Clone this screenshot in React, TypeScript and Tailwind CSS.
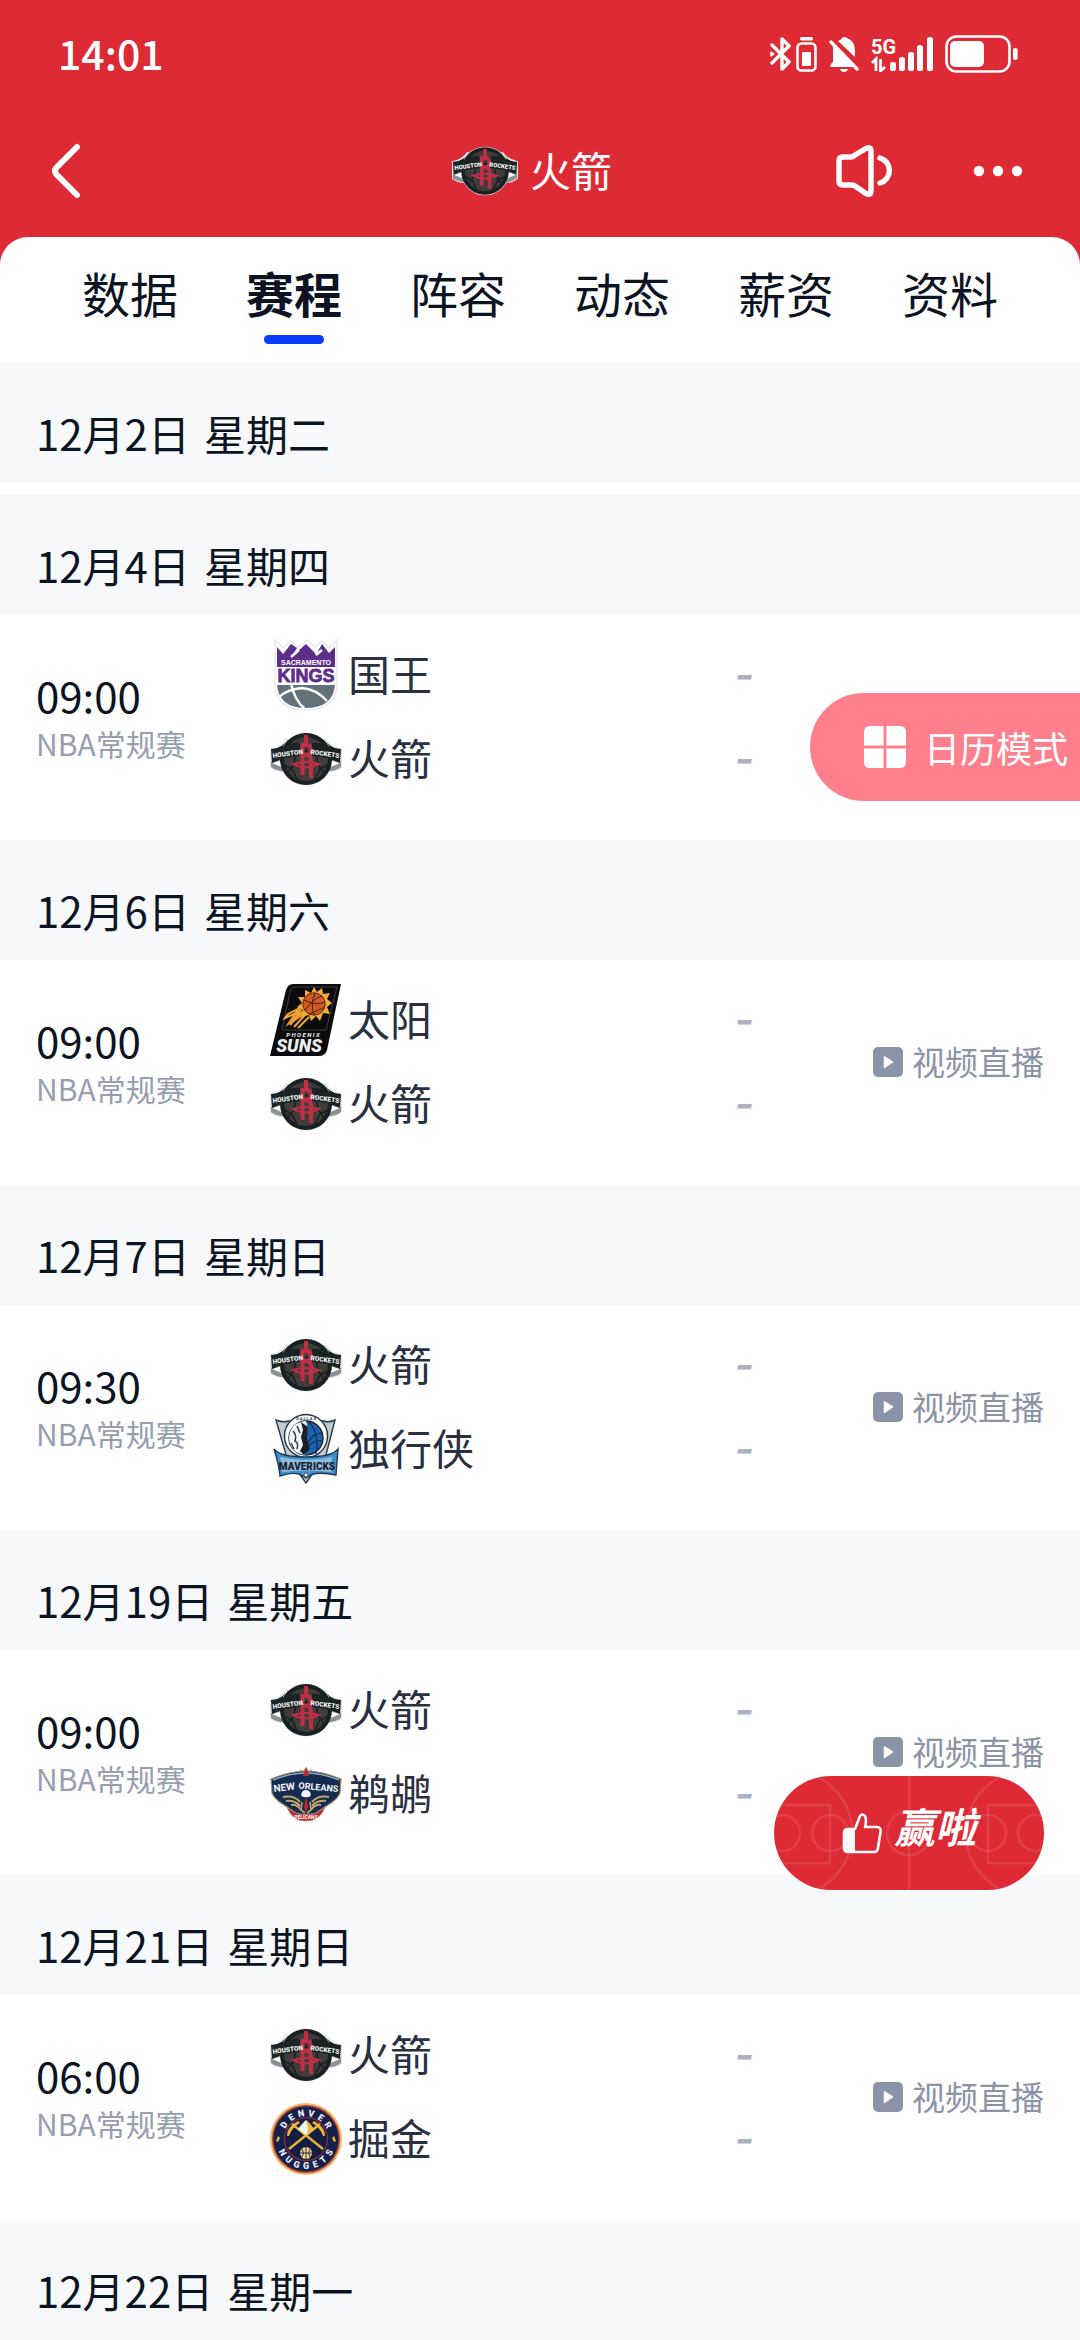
import type { ComponentType } from "react"

type LogoProps = { className?: string }

type Match = {
    time: string
    teams: TeamKey[]
    live: boolean
}

type Day = {
    date: string
    weekday: string
    match?: Match
}

const LOGO_FONT = "Roboto, 'Liberation Sans', sans-serif"

const RocketsLogo = ({ className }: LogoProps) => (
    <svg viewBox="0 0 72 72" className={className} aria-hidden="true">
        <g stroke="#e3e6e6" strokeWidth="2" strokeLinejoin="round">
            <path d="M1 39 L16 34 L18 48 Q7 49 1 44Z M71 39 L56 34 L54 48 Q65 49 71 44Z" />
            <path d="M1 26 Q12 24 17 16 L17 36 Q8 37 1 40Z M71 26 Q60 24 55 16 L55 36 Q64 37 71 40Z" />
            <circle cx="36" cy="36" r="25.5" />
        </g>
        <path d="M1 39 L16 35 L18 48 Q7 49 1 44Z M71 39 L56 35 L54 48 Q65 49 71 44Z" fill="#8c9193" />
        <path d="M2 40 L13 37 L14 45Z M70 40 L59 37 L58 45Z" fill="#fff" />
        <circle cx="36" cy="36" r="26" fill="#172022" />
        <circle cx="36" cy="36" r="22" fill="#3f3c3a" />
        <path d="M20 24 Q36 32 52 24 M18 50 Q26 40 25 34 M54 50 Q46 40 47 34 M27 56 L22 46 L14 42 M45 56 L50 46 L58 42" fill="none" stroke="#172022" strokeWidth="1.6" />
        <path d="M1 26 Q13 25 19 21 Q25 19 30 20 L30 33 Q14 34 2 40Z M71 26 Q59 25 53 21 Q47 19 42 20 L42 33 Q58 34 70 40Z" fill="#1b2425" />
        <path d="M23 41 Q36 48 49 41 Q36 37 23 41Z" fill="none" stroke="#c02e46" strokeWidth="2.2" />
        <path d="M32.500 20 V52 M32.500 22 H37 Q40.500 22 40.500 26 V28 Q40.500 32 37 32 H33 M38 32 Q41 33 41 38 V55 M36 12 V22" fill="none" stroke="#c02e46" strokeWidth="4" />
        <text x="3" y="35" transform="rotate(-8 3 35)" fontFamily={LOGO_FONT} fontWeight="900" fontSize="6.500" fill="#f1f3f3">HOUSTON</text>
        <text x="69" y="35" textAnchor="end" transform="rotate(8 69 35)" fontFamily={LOGO_FONT} fontWeight="900" fontSize="6.500" fill="#f1f3f3">ROCKETS</text>
    </svg>
)

const KingsLogo = ({ className }: LogoProps) => (
    <svg viewBox="0 0 72 72" className={className} aria-hidden="true">
        <path d="M5 1 L13 9 L21 2 L28 8 L37 1 L45 8 L52 2 L59 9 L67 1 V44 Q67 71 36 71 Q5 71 5 44Z" fill="#fff" stroke="#e4e4ea" strokeWidth="1.2" />
        <path d="M7 8 L13 15 L21 5 L27 9 L21 18 L36 5 L44 13 L46 16 L52 5 L59 14 L65 8 V28 H7Z" fill="#5d2e89" />
        <path d="M21 18 L29 11 M46 16 L52 11" stroke="#fff" strokeWidth="2.4" />
        <text x="36" y="26" textAnchor="middle" fontFamily="'Liberation Sans', sans-serif" fontWeight="700" fontSize="7" fill="#fff">SACRAMENTO</text>
        <text x="36" y="43" textAnchor="middle" fontFamily="'Liberation Sans', sans-serif" fontWeight="900" fontSize="18" fill="#5d2e89" stroke="#5d2e89" strokeWidth="0.8">KINGS</text>
        <path d="M7 46 H65 Q63 69 36 69 Q9 69 7 46Z" fill="#63717a" />
        <path d="M21 45 Q25 62 35 70 M9 58 Q18 50 32 49 Q46 50 57 62" fill="none" stroke="#fff" strokeWidth="2.4" />
    </svg>
)

const SunsLogo = ({ className }: LogoProps) => (
    <svg viewBox="0 0 72 72" className={className} aria-hidden="true">
        <path d="M23 0 H71 L57 66 Q55 72 49 72 H0 L16 6 Q18 0 23 0Z" fill="#0b0b0d" />
        <path d="M25 3 H67 L56 46 H12 L20 8 Q21 3 25 3Z" fill="none" stroke="#4c4d50" strokeWidth="0.8" />
        <path d="M29 22 L15 43 L35 31Z" fill="#e8912b" />
        <path d="M28 25 L18 30 L15 34 L29 28 M30 29 L20 41 M35 31 L24 43 M39 33 L28 44" stroke="#f0a437" strokeWidth="2" fill="none" />
        <path d="M44 3 L47 8 L52 4 L53 10 L60 9 L57 15 L62 19 L57 23 L60 30 L53 29 L50 37 L46 32 L41 37 L39 31 L31 33 L33 26 L27 23 L32 19 L28 13 L35 13 L35 6 L41 9Z" fill="#f4ab3a" />
        <circle cx="44" cy="20" r="11.2" fill="#cf5a22" stroke="#3b1609" strokeWidth="0.8" />
        <path d="M34 16 Q46 22 55 18 M45 9 Q40 20 44 31 M35 26 Q44 14 52 12 M39 30 Q50 26 55 23" fill="none" stroke="#4d1c0a" strokeWidth="1" />
        <text x="33" y="53" textAnchor="middle" fontFamily={LOGO_FONT} fontStyle="italic" fontWeight="700" fontSize="6" fill="#f5f5f5">P H O E N I X</text>
        <text x="29" y="68" textAnchor="middle" fontFamily={LOGO_FONT} fontStyle="italic" fontWeight="900" fontSize="18" fill="#eceef0">SUNS</text>
    </svg>
)

const MavericksLogo = ({ className }: LogoProps) => (
    <svg viewBox="0 0 72 72" className={className} aria-hidden="true">
        <path d="M6 7 Q14 10 18 8 H54 Q58 10 65 7 L56 42 L36 70 L16 42Z" fill="#c3c9ce" stroke="#2a3b4a" strokeWidth="1.4" />
        <circle cx="36" cy="23" r="21.5" fill="#fff" stroke="#273747" strokeWidth="1.4" />
        <circle cx="36" cy="25" r="17" fill="#1d63ae" stroke="#17212c" strokeWidth="1.4" />
        <path d="M38 8 Q50 20 46 41 M52 20 Q42 20 38 30 M53 28 Q44 26 36 36" fill="none" stroke="#12335c" strokeWidth="1.3" />
        <path d="M36 8 Q20 9 19 25 Q20 40 35 42 L38 34 L35 25 L38 16Z" fill="#f3f6f8" />
        <path d="M31 9 L38 14 L37 26 L40 36 L34 42 L30 38 L33 32 L31 24 L33 17Z" fill="#17212c" />
        <path d="M23 18 Q27 22 25 28 Q29 30 27 36 M27 13 L30 20 M21 30 L24 36" fill="none" stroke="#34424f" strokeWidth="1.6" />
        <text x="36" y="7" textAnchor="middle" fontFamily={LOGO_FONT} fontWeight="700" fontSize="4" fill="#273747">D A L L A S</text>
        <path d="M4 36 Q10 44 36 44 Q62 44 68 36 L66 62 Q52 59 43 61 L36 65 L29 61 Q20 59 10 63 Q9 52 4 36Z" fill="#3f8fcd" stroke="#1d3a57" strokeWidth="1.4" />
        <path d="M10 44 Q36 50 62 44 L61 59 Q36 56 12 59Z" fill="#8fbbdc" />
        <text x="37" y="57" textAnchor="middle" fontFamily={LOGO_FONT} fontWeight="900" fontSize="10" fill="#14202c">MAVERICKS</text>
        <circle cx="36" cy="62" r="2" fill="#fff" stroke="#273747" strokeWidth="0.8" />
    </svg>
)

const PelicansLogo = ({ className }: LogoProps) => (
    <svg viewBox="0 0 72 72" className={className} aria-hidden="true">
        <path d="M17 49 Q22 63 36 63 Q50 63 55 49Z" fill="#c8233a" stroke="#a58a5c" strokeWidth="1" />
        <path d="M30 11 L33 13 L36 9 L39 13 L42 11 L42 18 H30Z" fill="#c3a46c" />
        <path d="M1 21 Q20 13 36 13 Q52 13 71 21 L70 35 Q68 41 58 47 L46 55 Q36 58 26 55 L14 47 Q4 41 2 35Z" fill="#142c50" stroke="#a69068" strokeWidth="1.2" />
        <path d="M3 22 Q20 15 36 15 Q52 15 69 22" fill="none" stroke="#8ba9c4" strokeWidth="1.6" />
        <path d="M13 39 Q24 37 30 44 M16 43 Q25 42 30 48 M21 47 Q27 46 31 52 M59 39 Q48 37 42 44 M56 43 Q47 42 42 48 M51 47 Q45 46 41 52" fill="none" stroke="#c3a46c" strokeWidth="2" />
        <path d="M36 9 L33 18 H39Z" fill="#b5253a" />
        <text x="4" y="34" transform="rotate(-7 4 34)" fontFamily={LOGO_FONT} fontWeight="700" fontSize="10" fill="#f4f6f8">NEW</text>
        <text x="68" y="34" textAnchor="end" transform="rotate(5 68 34)" fontFamily={LOGO_FONT} fontWeight="700" fontSize="9" fill="#f4f6f8">ORLEANS</text>
        <circle cx="36" cy="38" r="5.5" fill="#142c50" />
        <path d="M31 37 Q32 32 36 32 Q40 32 41 37 Q39 40 36 39 Q33 40 31 37Z" fill="#f2f5f7" />
        <path d="M36 39 L38 49 L36 54 L34 49Z" fill="#c8233a" />
        <path d="M32 44 L31 52 L35 55 M40 44 L41 52 L37 55" fill="none" stroke="#c3a46c" strokeWidth="1.6" />
        <text x="36" y="61" textAnchor="middle" fontFamily={LOGO_FONT} fontWeight="700" fontSize="5" fill="#fff">PELICANS</text>
    </svg>
)

const NuggetsLogo = ({ className }: LogoProps) => (
    <svg viewBox="0 0 72 72" className={className} aria-hidden="true">
        <circle cx="36" cy="36" r="36" fill="#f3b56c" />
        <circle cx="36" cy="36" r="34" fill="#a9402f" />
        <circle cx="36" cy="36" r="32.5" fill="#17204a" />
        <circle cx="36" cy="36" r="21.5" fill="#151d42" stroke="#7a2f45" strokeWidth="1.4" />
        {"DENVER".split("").map((letter, i) => (
            <text key={i} x="36" y="13" textAnchor="middle" transform={`rotate(${-57 + i * 23} 36 36)`} fontFamily={LOGO_FONT} fontWeight="900" fontSize="9" fill="#e9eef5">{letter}</text>
        ))}
        {"NUGGETS".split("").map((letter, i) => (
            <text key={i} x="36" y="66" textAnchor="middle" transform={`rotate(${60 - i * 20} 36 36)`} fontFamily={LOGO_FONT} fontWeight="900" fontSize="9" fill="#e9eef5">{letter}</text>
        ))}
        <path d="M6 38 L8 33 L10 35 L8 39Z M66 38 L64 33 L62 35 L64 39Z" fill="#f2b632" />
        <path d="M19 46 L50 21 M53 46 L22 21" stroke="#e8b23a" strokeWidth="2.4" />
        <path d="M17 33 Q17 24 28 18 L30 20 Q22 24 19 33Z M55 33 Q55 24 44 18 L42 20 Q50 24 53 33Z" fill="#f0b837" />
        <path d="M28 26 L32 21 L36 17 L40 21 L44 26 L40 29 L36 32 L32 29Z" fill="#f0f3f6" />
        <path d="M36 17 L40 21 L44 26 L40 29 L37 32 L38 26Z" fill="#f2b632" />
        <circle cx="36" cy="50" r="6" fill="#f3d489" />
        <path d="M30 50 H42 M36 44 V56 M32 46 Q35 50 32 54 M40 46 Q37 50 40 54" stroke="#17204a" strokeWidth="0.9" fill="none" />
    </svg>
)

const TEAMS = {
    rockets: { name: "火箭", Logo: RocketsLogo },
    kings: { name: "国王", Logo: KingsLogo },
    suns: { name: "太阳", Logo: SunsLogo },
    mavericks: { name: "独行侠", Logo: MavericksLogo },
    pelicans: { name: "鹈鹕", Logo: PelicansLogo },
    nuggets: { name: "掘金", Logo: NuggetsLogo },
} satisfies Record<string, { name: string; Logo: ComponentType<LogoProps> }>

type TeamKey = keyof typeof TEAMS

const TABS = ["数据", "赛程", "阵容", "动态", "薪资", "资料"]

const DAYS: Day[] = [
    { date: "12月2日", weekday: "星期二" },
    { date: "12月4日", weekday: "星期四", match: { time: "09:00", teams: ["kings", "rockets"], live: false } },
    { date: "12月6日", weekday: "星期六", match: { time: "09:00", teams: ["suns", "rockets"], live: true } },
    { date: "12月7日", weekday: "星期日", match: { time: "09:30", teams: ["rockets", "mavericks"], live: true } },
    { date: "12月19日", weekday: "星期五", match: { time: "09:00", teams: ["rockets", "pelicans"], live: true } },
    { date: "12月21日", weekday: "星期日", match: { time: "06:00", teams: ["rockets", "nuggets"], live: true } },
    { date: "12月22日", weekday: "星期一" },
]

const StatusBar = () => (
    <div className="flex h-[108px] items-center justify-between pl-[58px] pr-[62px]">
        <span className="pb-1 text-[41px] font-medium leading-[48px]">14:01</span>

        <div className="flex items-center gap-3">
            <div className="flex items-center gap-1">
                <svg width="22" height="36" viewBox="0 0 22 36" fill="none" stroke="currentColor" strokeWidth="3.4" strokeLinecap="round" strokeLinejoin="round" aria-hidden="true">
                    <path d="M2 9 L19 26 L12 33 V3 L19 10 L2 27" />
                    <path d="M1 16 V20 L4 18Z" strokeWidth="1.4" fill="currentColor" />
                </svg>
                <svg width="21" height="36" viewBox="0 0 21 36" aria-hidden="true">
                    <rect x="4" y="1" width="13" height="3.4" rx="1.6" fill="currentColor" />
                    <rect x="1.5" y="7.5" width="18" height="27" rx="4" fill="none" stroke="currentColor" strokeWidth="2.6" />
                    <rect x="6" y="16" width="9" height="14" rx="1" fill="currentColor" />
                </svg>
            </div>

            <svg width="30" height="36" viewBox="0 0 30 36" fill="currentColor" aria-hidden="true">
                <path d="M9 5 Q12 4 13 2 Q15 0 18 2 Q26 5 26 15 V21Z" />
                <path d="M4 10 L25 31 H2 Q0 29 4 26Z" />
                <path d="M2 6 L28 33" stroke="currentColor" strokeWidth="3.4" strokeLinecap="round" />
                <path d="M11 33 H19 Q18 36 15 36 Q12 36 11 33Z" />
            </svg>

            <svg width="62" height="36" viewBox="0 0 62 36" fill="currentColor" aria-hidden="true">
                <text x="0" y="18" fontFamily="Roboto, sans-serif" fontWeight="700" fontSize="20">5G</text>
                <path d="M1 27 L5 23 V35 M9.500 23 V35 L14 31" fill="none" stroke="currentColor" strokeWidth="2.8" />
                <rect x="19" y="26" width="6" height="9" rx="2.6" />
                <rect x="28" y="21" width="6" height="14" rx="2.6" />
                <rect x="37" y="16" width="6" height="19" rx="2.6" />
                <rect x="46" y="9" width="6" height="26" rx="2.6" />
                <rect x="56" y="1" width="6" height="34" rx="2.6" />
            </svg>

            <svg width="73" height="38" viewBox="0 0 73 38" aria-hidden="true">
                <rect x="1.5" y="1.5" width="63" height="35" rx="10" fill="none" stroke="currentColor" strokeWidth="2.6" />
                <rect x="5" y="6" width="34" height="26" rx="5" fill="currentColor" />
                <rect x="68" y="13" width="4.6" height="12" rx="2" fill="currentColor" />
            </svg>
        </div>
    </div>
)

const TitleBar = () => (
    <div className="grid h-[129px] grid-cols-[1fr_auto_1fr] items-center px-12 pb-[3px]">
        <button type="button" aria-label="返回" className="justify-self-start">
            <svg width="36" height="60" viewBox="0 0 36 60" fill="none" stroke="currentColor" strokeWidth="6" strokeLinecap="round" strokeLinejoin="round" aria-hidden="true">
                <path d="M29 6 L8 27 Q6 30 8 33 L29 54" />
            </svg>
        </button>

        <h1 className="mr-4 flex items-center gap-3 text-[41px] leading-[48px]">
            <RocketsLogo className="h-[66px] w-[66px]" />
            <span className="pb-1">火箭</span>
        </h1>

        <div className="flex items-center gap-[75px] justify-self-end pr-2">
            <button type="button" aria-label="播报">
                <svg width="64" height="56" viewBox="0 0 64 56" fill="none" stroke="currentColor" strokeWidth="5.4" strokeLinecap="round" strokeLinejoin="round" aria-hidden="true">
                    <path d="M10 14 H18 Q20 14 22 12 L33 5.500 Q38 3 38 8 V48 Q38 53 33 50.500 L22 43 Q20 42 18 42 H10 Q6 42 6 38 V18 Q6 14 10 14Z" />
                    <path d="M47 15 A13 13 0 0 1 47 40" />
                </svg>
            </button>
            <button type="button" aria-label="更多">
                <svg width="52" height="20" viewBox="0 0 52 20" fill="currentColor" aria-hidden="true">
                    <circle cx="7" cy="10" r="5.200" />
                    <circle cx="26" cy="10" r="5.200" />
                    <circle cx="45" cy="10" r="5.200" />
                </svg>
            </button>
        </div>
    </div>
)

const Tabs = () => (
    <nav className="grid h-[126px] grid-cols-6 rounded-t-[28px] bg-white px-12 text-[#0c1322]">
        {TABS.map((tab) => (
            <button key={tab} type="button" className="flex flex-col items-center pt-[25px]">
                <span className={tab === "赛程" ? "text-[48px] font-bold leading-[60px]" : "text-[48px] leading-[60px]"}>{tab}</span>
                {tab === "赛程" && <span className="mt-[13px] h-[9px] w-[60px] rounded-full bg-[#0a3cff]" />}
            </button>
        ))}
    </nav>
)

const TeamRow = ({ team }: { team: TeamKey }) => {
    const { name, Logo } = TEAMS[team]

    return (
        <div className="flex h-[84px] items-center gap-[6px]">
            <Logo className="h-[72px] w-[72px]" />
            <span className="pb-1 text-[42px] leading-[48px] text-[#2a3042]">{name}</span>
            <span className="ml-auto font-[Inter,sans-serif] text-[42px] font-semibold italic leading-[48px] text-[#adb2c1]">-</span>
        </div>
    )
}

const MatchRow = ({ match }: { match: Match }) => (
    <div className="flex items-center bg-white px-9 pb-[39px] pt-[18px]">
        <div className="w-[234px] pt-1">
            <p className="text-[42px] leading-[48px]">{match.time}</p>
            <p className="text-[30px] leading-[48px] text-[#989db0]">NBA常规赛</p>
        </div>

        <div className="flex-1">
            {match.teams.map((team) => (
                <TeamRow key={team} team={team} />
            ))}
        </div>

        <div className="flex w-[290px] justify-end">
            {match.live && (
                <a href="#live" className="flex items-center gap-[9px] text-[33px] leading-[36px] text-[#8d93a7]">
                    <svg width="30" height="30" viewBox="0 0 30 30" aria-hidden="true">
                        <rect width="30" height="30" rx="5" fill="currentColor" />
                        <path d="M11.500 10 L19.500 15 L11.500 20.500Z" fill="#fff" stroke="#fff" strokeWidth="1.500" strokeLinejoin="round" />
                    </svg>
                    <span className="pb-[2px]">视频直播</span>
                </a>
            )}
        </div>
    </div>
)

const CalendarButton = () => (
    <button type="button" className="fixed right-0 top-[693px] flex h-[108px] items-center gap-[18px] rounded-l-full bg-[#ff7f8c] pl-[54px] pr-3 text-[36px] leading-[48px] text-white">
        <svg width="42" height="42" viewBox="0 0 42 42" fill="currentColor" aria-hidden="true">
            <path d="M6 0 H19.500 V19.500 H0 V6 Q0 0 6 0Z" />
            <path d="M22.500 0 H36 Q42 0 42 6 V19.500 H22.500Z" />
            <path d="M0 22.500 H19.500 V42 H6 Q0 42 0 36Z" />
            <path d="M22.500 22.500 H42 V36 Q42 42 36 42 H22.500Z" />
        </svg>
        日历模式
    </button>
)

const CheerButton = () => (
    <button type="button" className="fixed right-9 top-[1776px] flex h-[114px] w-[270px] items-center justify-center gap-3 overflow-hidden rounded-full bg-[#dd2a34] text-white">
        <svg viewBox="0 0 270 114" className="absolute inset-0 h-full w-full" fill="none" stroke="#fff" strokeOpacity="0.1" strokeWidth="2.500" aria-hidden="true">
            <path d="M135 0 V114" />
            <circle cx="135" cy="57" r="22" />
            <path d="M0 29 H56 V87 H0 M270 29 H214 V87 H270" />
            <circle cx="56" cy="57" r="18" />
            <circle cx="214" cy="57" r="18" />
            <circle cx="8" cy="57" r="18" />
            <circle cx="262" cy="57" r="18" />
            <circle cx="15" cy="57" r="63" />
            <circle cx="255" cy="57" r="63" />
        </svg>
        <svg width="40" height="42" viewBox="0 0 40 42" className="relative" aria-hidden="true">
            <path d="M5 17 H13 V40 H5 Q1 40 1 36 V21 Q1 17 5 17Z" fill="currentColor" />
            <path d="M13 17 L18 4 Q20 1 23 4 Q25 8 23 15 H35 Q39 15 38.500 20 L36 36 Q35.500 40 32 40 H6 Q2 40 2 36 V21 Q2 17 6 17Z" fill="none" stroke="currentColor" strokeWidth="2.600" strokeLinejoin="round" />
        </svg>
        <span className="relative pb-4 text-[41px] font-bold italic leading-[48px]">赢啦</span>
    </button>
)

export default function App() {
    return (
        <div className="min-h-screen bg-white font-['Noto_Sans_CJK_SC',sans-serif] text-[#0c1322]">
            <header className="bg-[#dd2a34] text-white">
                <StatusBar />
                <TitleBar />
                <Tabs />
            </header>

            <main>
                {DAYS.map(({ date, weekday, match }, i) => (
                    <section key={date} className={i === 0 ? "mb-3" : ""}>
                        <h2 className="flex gap-[14px] bg-[#f6f8fa] px-9 pb-[26px] pt-[46px] text-[42px] leading-[48px]">
                            <span>{date}</span>
                            <span>{weekday}</span>
                        </h2>
                        {match && <MatchRow match={match} />}
                    </section>
                ))}
            </main>

            <CalendarButton />
            <CheerButton />
        </div>
    )
}
